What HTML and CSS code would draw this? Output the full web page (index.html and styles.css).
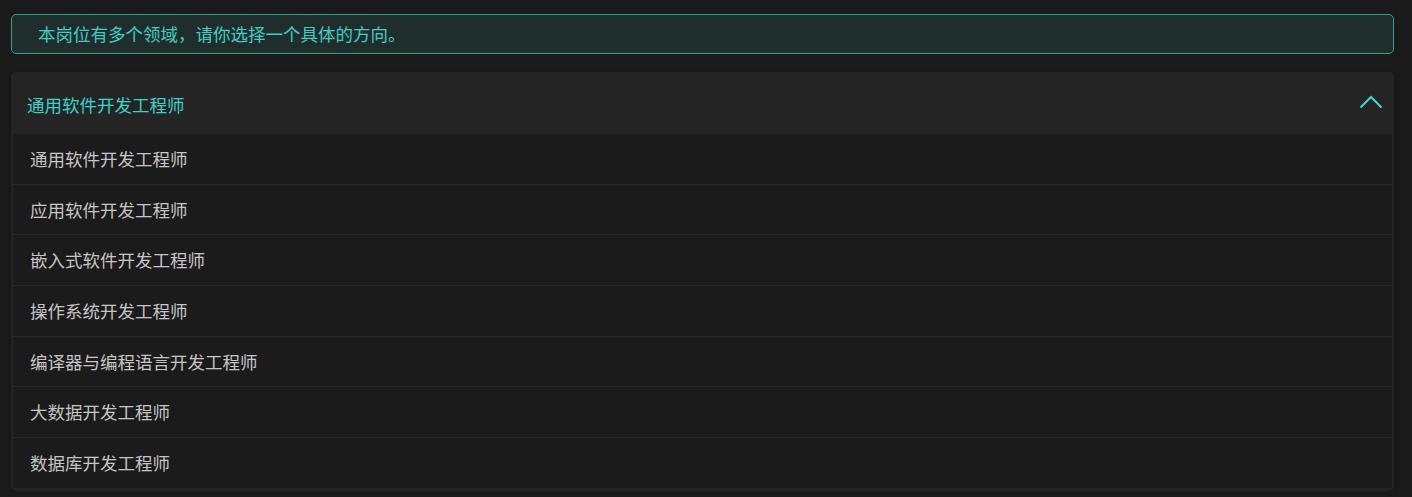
FILE: index.html
```html
<!DOCTYPE html>
<html lang="zh-CN">
<head>
<meta charset="utf-8">
<title>选择方向</title>
<link rel="stylesheet" href="styles.css">
</head>
<body>
<div class="page">
  <div class="alert">本岗位有多个领域，请你选择一个具体的方向。</div>
  <div class="panel">
    <div class="panel-header">
      <span class="panel-title">通用软件开发工程师</span>
      <svg class="chevron" width="24" height="14" viewBox="0 0 24 14">
        <polyline points="1.5,12.5 12,2 22.5,12.5" fill="none" stroke="#3ad8cf" stroke-width="2"/>
      </svg>
    </div>
    <ul class="options">
      <li class="option">通用软件开发工程师</li>
      <li class="option">应用软件开发工程师</li>
      <li class="option">嵌入式软件开发工程师</li>
      <li class="option">操作系统开发工程师</li>
      <li class="option">编译器与编程语言开发工程师</li>
      <li class="option">大数据开发工程师</li>
      <li class="option">数据库开发工程师</li>
    </ul>
  </div>
</div>
</body>
</html>
```

FILE: styles.css
```css
html, body {
  margin: 0;
  padding: 0;
  background: #1a1a1a;
}
body {
  font-family: "Noto Sans CJK SC", "Noto Sans", sans-serif;
}
.page {
  padding: 14px 18px 0 11px;
  display: flex;
  flex-direction: column;
  gap: 18px;
}
.alert {
  height: 38px;
  border: 1px solid #2c9f99;
  border-radius: 5px;
  background: #1f2e2d;
  color: #42ccc3;
  font-size: 17.5px;
  line-height: 38px;
  padding-left: 26px;
  box-sizing: content-box;
}
.panel {
  background: #242424;
  border-radius: 5px;
  padding: 0 2px 3px 2px;
  box-shadow: 0 2px 4px rgba(0,0,0,0.25);
}
.panel-header {
  height: 62px;
  margin: 0 -2px;
  display: flex;
  align-items: center;
  justify-content: space-between;
  padding: 0 11px 0 16px;
}
.panel-title {
  color: #3ad3ca;
  font-size: 17.5px;
  padding-top: 2px;
}
.chevron {
  display: block;
  margin-top: -2px;
}
.options {
  list-style: none;
  margin: 0;
  padding: 0;
  background: #1b1b1b;
}
.option {
  height: 49.7px;
  line-height: 49.7px;
  padding-left: 17px;
  color: #c6c6c6;
  font-size: 17.5px;
  border-bottom: 1px solid #2a2a2a;
}
.option:last-child {
  border-bottom: none;
}
```
